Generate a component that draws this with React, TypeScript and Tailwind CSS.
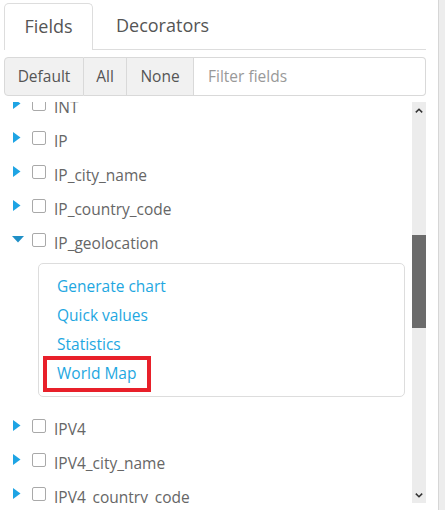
import React from "react";

const fieldsTop = ["INT", "IP", "IP_city_name", "IP_country_code"];
const fieldsBottom = ["IPV4", "IPV4_city_name", "IPV4_country_code"];

function Caret({ open }: { open?: boolean }) {
  return (
    <span className="w-[19px] flex items-center shrink-0">
      {open ? (
        <svg width="12" height="7" viewBox="0 0 12 7" className="ml-[-1px]">
          <path d="M0 0 L12 0 L6 6.5 Z" fill="#1f8fc6" />
        </svg>
      ) : (
        <svg width="8" height="11" viewBox="0 0 8 11">
          <path d="M0 0 L7.5 5.5 L0 11 Z" fill="#1ea4e4" />
        </svg>
      )}
    </span>
  );
}

function Row({ name, open }: { name: string; open?: boolean }) {
  return (
    <div className="h-[34px] flex items-center pl-[9px]">
      <span className="flex items-center pb-[7px]">
        <Caret open={open} />
        <span className="w-[14px] h-[14px] border border-[#a9a9a9] rounded-[2px] bg-white shrink-0" />
      </span>
      <span className="ml-[8px] text-[15.5px] text-[#666] leading-[20px]">{name}</span>
    </div>
  );
}

export default function App() {
  return (
    <div
      className="w-[445px] h-[510px] flex bg-white overflow-hidden"
      style={{ fontFamily: '"Open Sans", "Noto Sans", sans-serif' }}
    >
      <div className="flex-1 flex flex-col pl-[4px] pr-[12px]">
        {/* Tabs */}
        <div className="flex h-[50px] pt-[3px] border-b border-[#dddddd]">
          <div className="w-[89px] border border-[#dddddd] border-b-0 rounded-t-[5px] bg-white mb-[-1px] flex items-center justify-center text-[18px] text-[#555] pb-[1px]">
            Fields
          </div>
          <div className="pl-[23px] flex items-center text-[18px] text-[#555] pb-[1px]">Decorators</div>
        </div>

        {/* Button group */}
        <div className="mt-[7px] h-[39px] flex">
          <div className="w-[80px] border border-[#d9d9d9] rounded-l-[4px] bg-[#f1f1f1] flex items-center justify-center text-[15.5px] text-[#555]">
            Default
          </div>
          <div className="w-[43px] border border-l-0 border-[#d9d9d9] bg-[#f1f1f1] flex items-center justify-center text-[15.5px] text-[#555]">
            All
          </div>
          <div className="w-[67px] border border-l-0 border-[#d9d9d9] bg-[#f1f1f1] flex items-center justify-center text-[15.5px] text-[#555]">
            None
          </div>
          <div className="flex-1 border border-l-0 border-[#d9d9d9] rounded-r-[4px] bg-white flex items-center pl-[14px] text-[15.5px] text-[#999]">
            Filter fields
          </div>
        </div>

        {/* List + scrollbar */}
        <div className="mt-[6px] h-[401px] flex">
          <div className="flex-1 overflow-hidden">
            <div className="mt-[-12px]">
              {fieldsTop.map((f) => (
                <Row key={f} name={f} />
              ))}
              <Row name="IP_geolocation" open />
              <div className="mt-[3px] mb-[15px] ml-[34px] mr-[7px] border border-[#dddddd] rounded-[5px] py-[8px]">
                {["Generate chart", "Quick values", "Statistics"].map((t) => (
                  <div key={t} className="h-[29px] flex items-center pl-[18px] text-[15.5px] text-[#1ea7e1]">
                    {t}
                  </div>
                ))}
                <div className="h-[29px] flex items-center pl-[18px] text-[15.5px] text-[#1ea7e1]">
                  <span className="relative leading-[29px]">
                    World Map
                    <span className="absolute left-[-14px] right-[-15px] top-[-3px] bottom-[-4px] border-[4px] border-[#e8202a]" />
                  </span>
                </div>
              </div>
              {fieldsBottom.map((f) => (
                <Row key={f} name={f} />
              ))}
            </div>
          </div>
          {/* scrollbar */}
          <div className="w-[14px] bg-[#ececec] flex flex-col items-center">
            <div className="h-[14px] flex items-center justify-center mt-[1px]">
              <svg width="8" height="5" viewBox="0 0 8 5">
                <path d="M0.8 4.4 L4 1.2 L7.2 4.4" stroke="#333" strokeWidth="1.5" fill="none" />
              </svg>
            </div>
            <div className="mt-[118px] w-[14px] h-[93px] bg-[#6b6b6b]" />
            <div className="flex-1" />
            <div className="h-[14px] flex items-center justify-center mb-[1px]">
              <svg width="8" height="5" viewBox="0 0 8 5">
                <path d="M0.8 0.6 L4 3.8 L7.2 0.6" stroke="#333" strokeWidth="1.5" fill="none" />
              </svg>
            </div>
          </div>
        </div>
      </div>
      {/* right window edge */}
      <div className="w-[7px] border-l border-[#d6d6d6] bg-[#ededed]" />
    </div>
  );
}
